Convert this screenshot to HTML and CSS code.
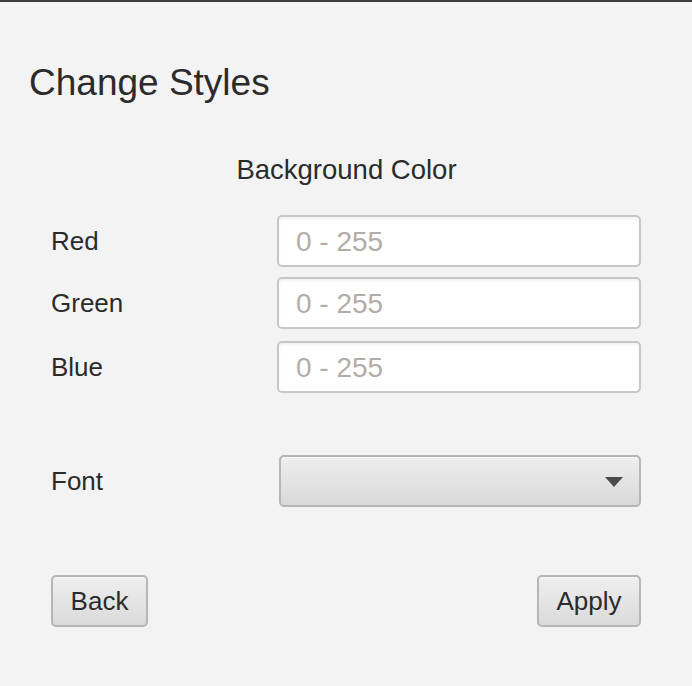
FILE: index.html
```html
<!DOCTYPE html>
<html>
<head>
<meta charset="utf-8">
<link rel="stylesheet" href="styles.css">
</head>
<body>
<div class="window">
  <h1 class="title">Change Styles</h1>
  <div class="section-title">Background Color</div>
  <div class="rows">
    <div class="row row-red">
      <span class="label">Red</span>
      <div class="field"><span class="placeholder">0 - 255</span></div>
    </div>
    <div class="row row-green">
      <span class="label">Green</span>
      <div class="field"><span class="placeholder">0 - 255</span></div>
    </div>
    <div class="row row-blue">
      <span class="label">Blue</span>
      <div class="field"><span class="placeholder">0 - 255</span></div>
    </div>
  </div>
  <div class="row row-font">
    <span class="label">Font</span>
    <div class="combo">
      <svg class="arrow" width="18" height="10" viewBox="0 0 18 10"><polygon points="0,0 18,0 9,10" fill="#4a4a4a"/></svg>
    </div>
  </div>
  <div class="buttons">
    <div class="btn btn-back">Back</div>
    <div class="btn btn-apply">Apply</div>
  </div>
</div>
</body>
</html>
```
FILE: styles.css
```css
html, body {
  margin: 0;
  padding: 0;
  background: #f3f3f3;
}
body {
  font-family: "Liberation Sans", Arial, sans-serif;
  color: #2b2b2b;
  width: 692px;
  height: 686px;
  overflow: hidden;
}
.window {
  border-top: 2px solid #3f3f3f;
  padding: 0 51px 0 29px;
}
.title {
  margin: 59px 0 0 0;
  font-size: 37px;
  font-weight: normal;
  line-height: 44px;
}
.section-title {
  margin-top: 49px;
  font-size: 27.5px;
  line-height: 32px;
  text-align: center;
  padding-left: 23px;
}
.rows {
  margin-top: 29px;
  display: flex;
  flex-direction: column;
}
.row {
  display: flex;
  align-items: center;
  padding-left: 22px;
}
.row-green { margin-top: 10px; }
.row-blue { margin-top: 12px; }
.label {
  font-size: 26px;
  line-height: 30px;
  width: 226px;
}
.field {
  flex: 1;
  box-sizing: border-box;
  height: 52px;
  border: 2px solid #c6c6c6;
  border-radius: 5px;
  background: #fff;
  box-shadow: inset 0 2px 3px rgba(0,0,0,0.06);
  display: flex;
  align-items: center;
  padding: 2px 0 0 17px;
}
.placeholder {
  font-size: 28px;
  line-height: 32px;
  color: #b3aca9;
}
.row-font {
  margin-top: 62px;
}
.row-font .label {
  width: 228px;
}
.combo {
  flex: 1;
  height: 52px;
  box-sizing: border-box;
  border: 2px solid #b6b6b6;
  border-radius: 5px;
  background: linear-gradient(#eeeeee, #d9d9d9);
  box-shadow: inset 0 1px 0 #f8f8f8;
  display: flex;
  align-items: center;
  justify-content: flex-end;
  padding-right: 16px;
}
.arrow {
  display: block;
  margin-top: 2px;
}
.buttons {
  margin-top: 68px;
  display: flex;
  justify-content: space-between;
  padding-left: 22px;
}
.btn {
  height: 52px;
  box-sizing: border-box;
  border: 2px solid #b6b6b6;
  border-radius: 5px;
  background: linear-gradient(#efefef, #dadada);
  box-shadow: inset 0 1px 0 #f8f8f8;
  font-size: 26px;
  line-height: 30px;
  display: flex;
  align-items: center;
  justify-content: center;
}
.btn-back { width: 97px; }
.btn-apply { width: 104px; }
```
